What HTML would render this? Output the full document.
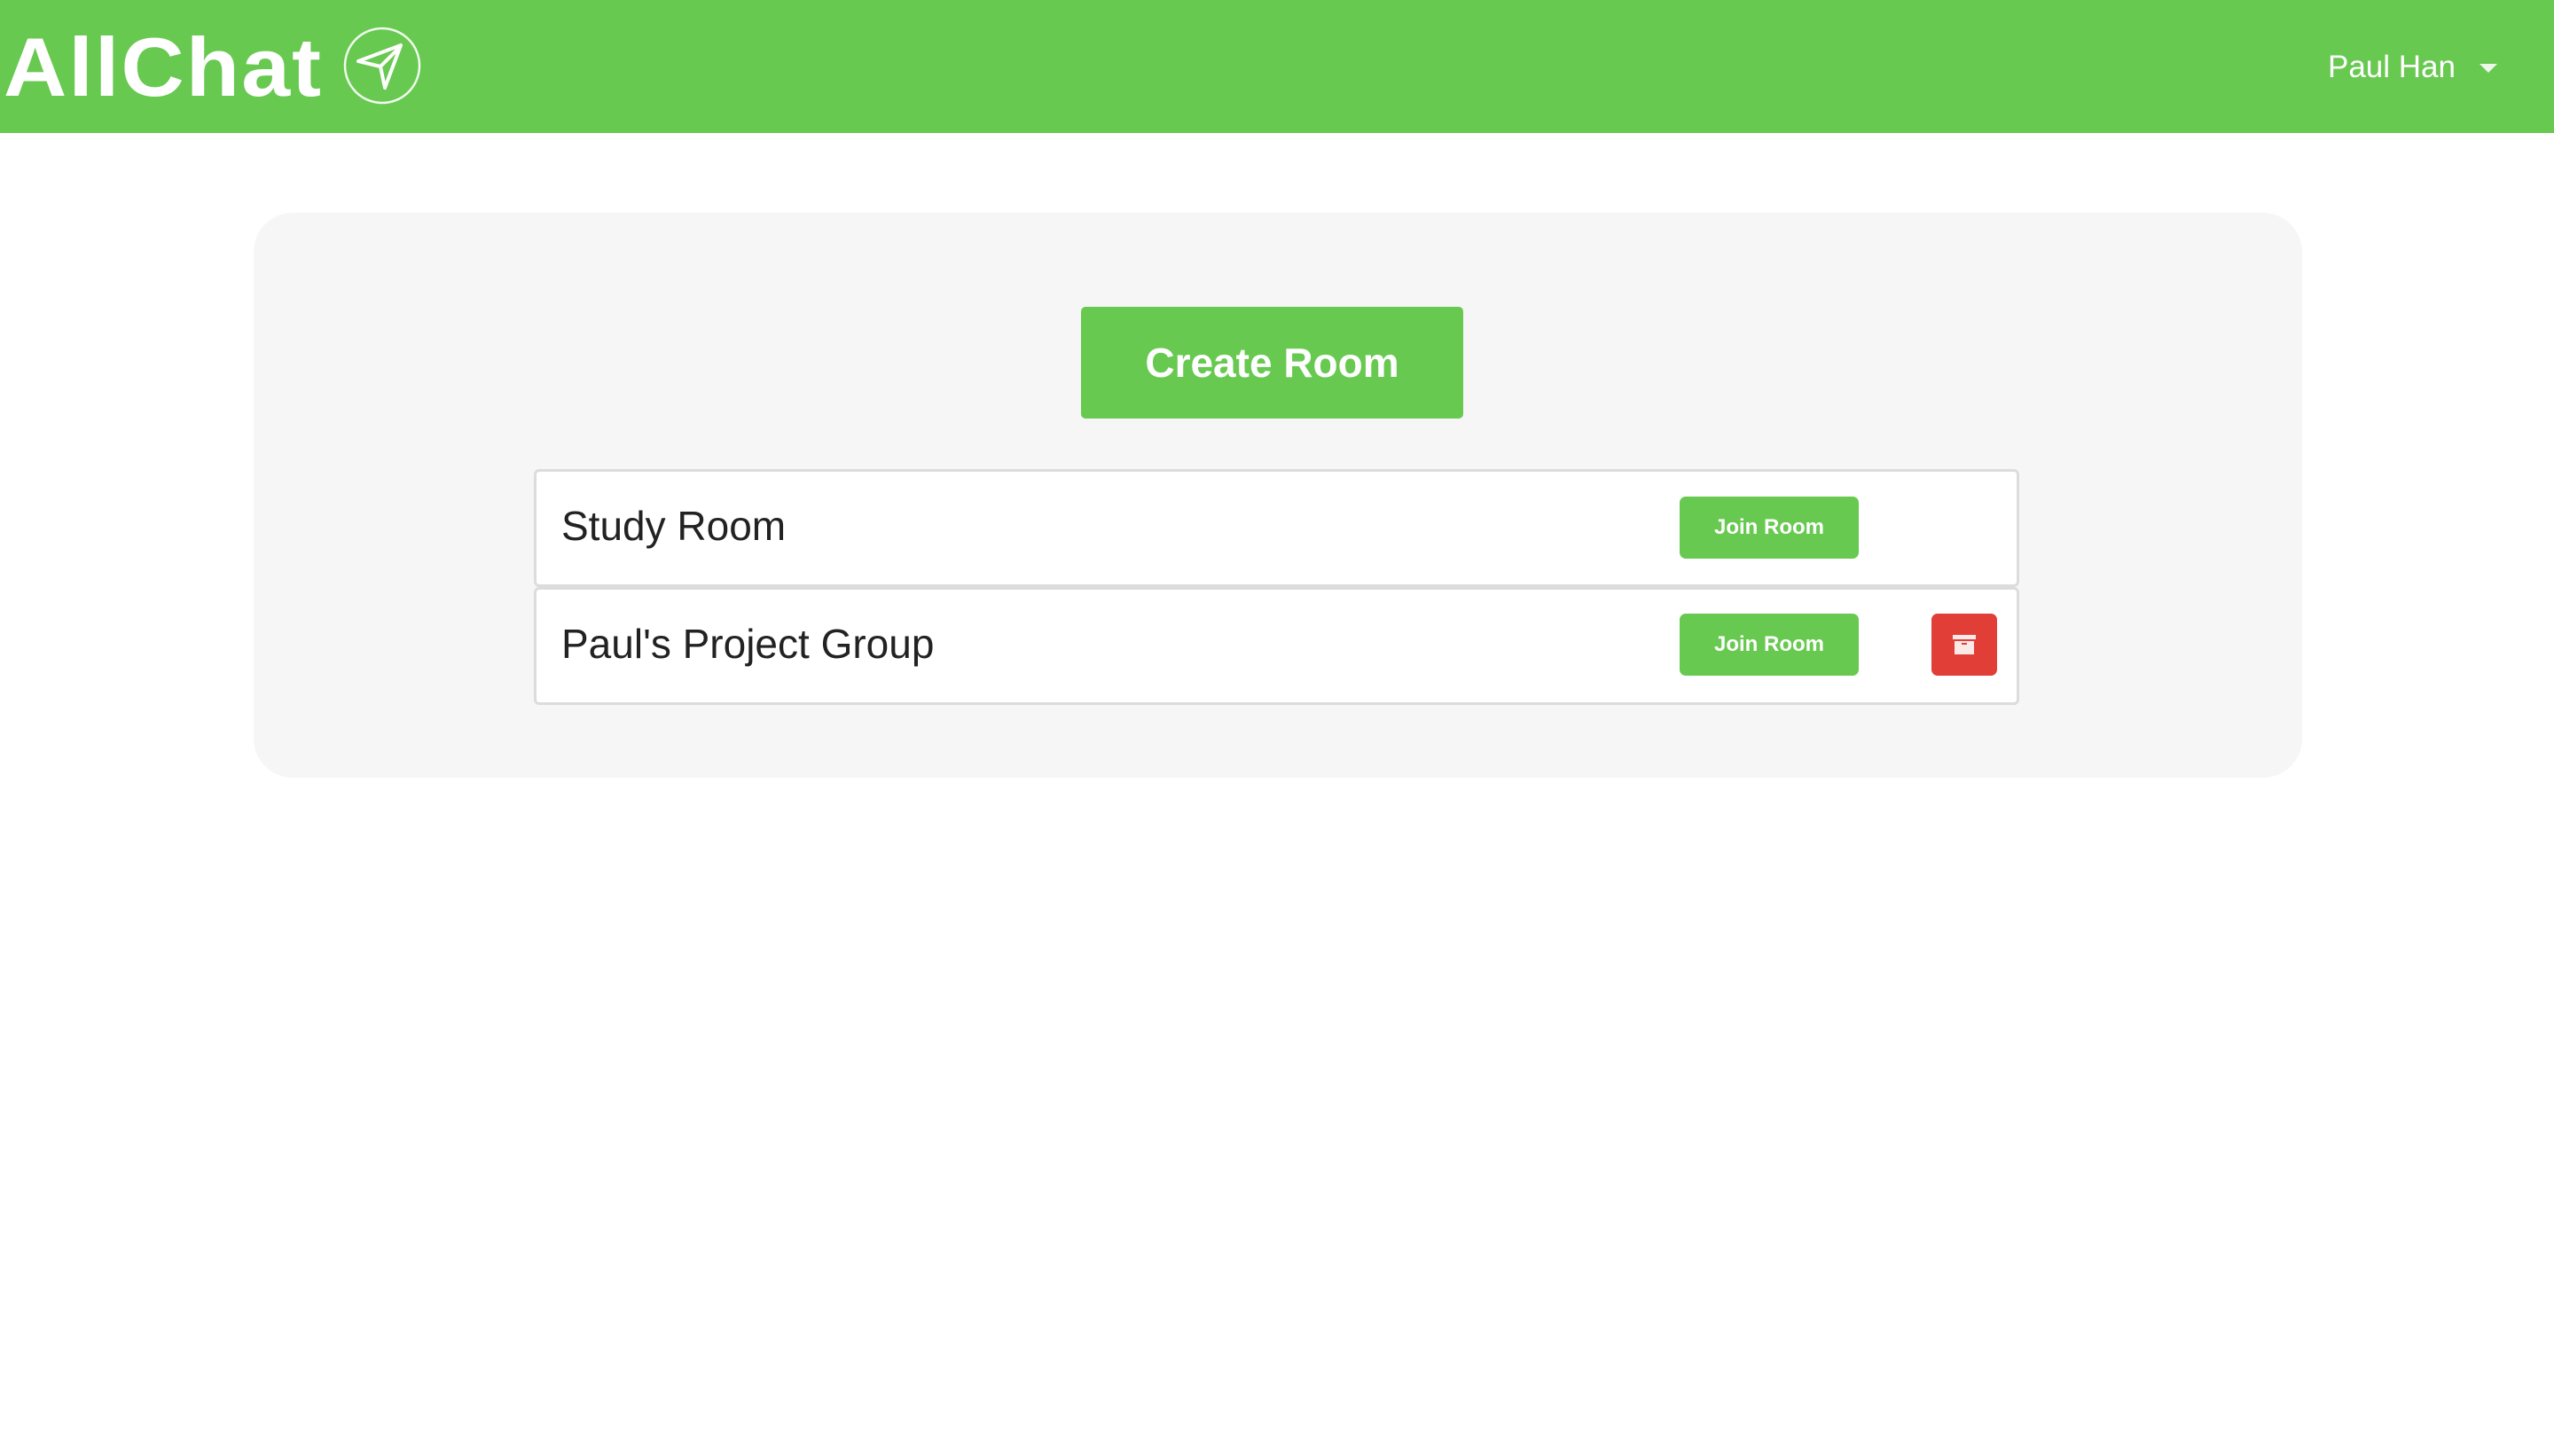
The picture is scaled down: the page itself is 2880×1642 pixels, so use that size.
<!DOCTYPE html>
<html><head><meta charset="utf-8"><style>
*{margin:0;padding:0;box-sizing:border-box}
body{width:2880px;height:1642px;background:#fff;font-family:"Liberation Sans",sans-serif;position:relative;overflow:hidden}
.hdr{position:absolute;left:0;top:0;width:2880px;height:150px;background:#68c951}
.logo{position:absolute;left:4px;top:22px;font-size:94px;font-weight:bold;color:#fff;letter-spacing:2px;white-space:nowrap;transform-origin:left top}
.user{position:absolute;left:2625px;top:56px;font-size:35px;color:#fff}
.caret{position:absolute;left:2796px;top:72px;width:0;height:0;border-left:10px solid transparent;border-right:10px solid transparent;border-top:10px solid #eef8ea}
.card{position:absolute;left:286px;top:240px;width:2310px;height:637px;background:#f6f6f6;border-radius:44px}
.create{position:absolute;left:1219px;top:346px;width:431px;height:126px;background:#68c951;border-radius:5px;color:#fff;font-weight:bold;font-size:46px;text-align:center;line-height:126px}
.row{position:absolute;left:602px;width:1675px;background:#fff;border:3px solid #dcdcdc;border-radius:6px}
.row .t{position:absolute;left:28px;font-size:46px;color:#222}
.join{position:absolute;left:1289px;width:202px;height:70px;background:#68c951;border-radius:7px;color:#fff;font-weight:bold;font-size:24px;text-align:center;line-height:70px}
.del{position:absolute;left:1573px;width:74px;height:70px;background:#e03e36;border-radius:7px}
</style></head><body>
<div class="hdr">
<div class="logo" style="transform:scaleX(1.05)">AllChat</div>
<svg style="position:absolute;left:386px;top:29px" width="90" height="90" viewBox="0 0 90 90">
<circle cx="45" cy="45" r="42" fill="none" stroke="#fff" stroke-width="2.5" opacity=".9"/>
<path d="M18 40 L66 22 L48 70 L43 46 Z M43 46 L64 25" fill="none" stroke="#fff" stroke-width="4" stroke-linejoin="round"/>
</svg>
<div class="user">Paul Han</div>
<div class="caret"></div>
</div>
<div class="card"></div>
<div class="create">Create Room</div>
<div class="row" style="top:529px;height:133px">
<div class="t" style="top:34px">Study Room</div>
<div class="join" style="top:28px">Join Room</div>
</div>
<div class="row" style="top:662px;height:133px">
<div class="t" style="top:34px">Paul's Project Group</div>
<div class="join" style="top:27px">Join Room</div>
<div class="del" style="top:27px">
<svg width="74" height="70" viewBox="0 0 74 70"><rect x="24" y="24" width="26" height="5" fill="#fbe9e8"/><rect x="26" y="31" width="22" height="15" fill="#fbe9e8"/><rect x="34" y="33" width="6" height="2" fill="#e03e36"/></svg>
</div>
</div>
</body></html>
